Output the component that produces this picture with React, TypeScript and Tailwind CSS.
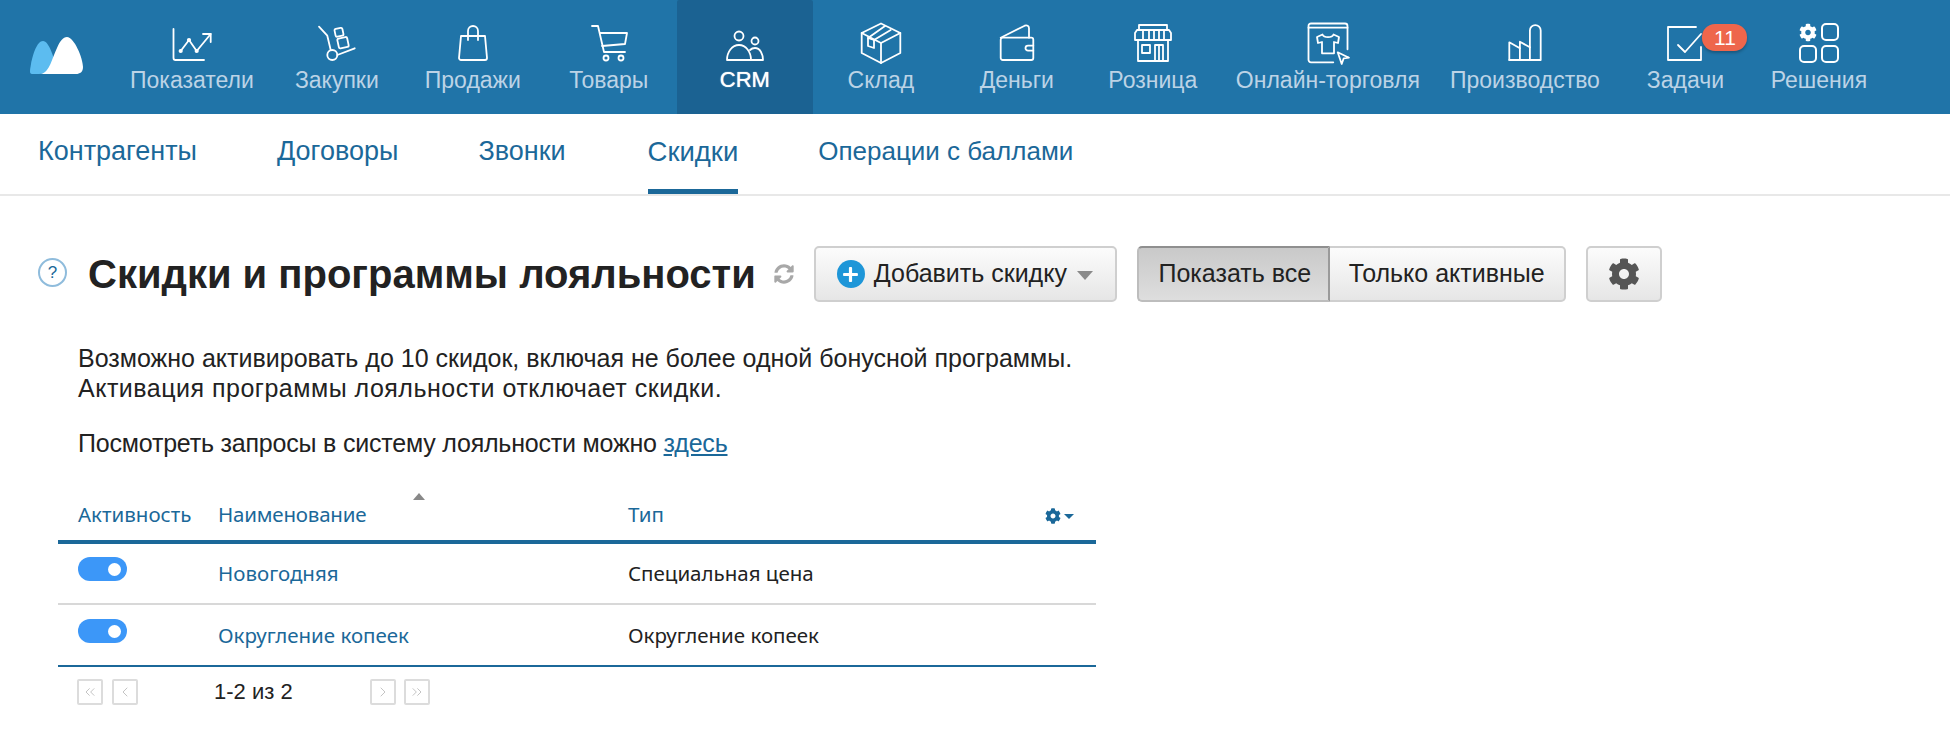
import type { ReactNode } from "react";
import { FaCog, FaPlus, FaSyncAlt } from "react-icons/fa";
import { ChevronLeft, ChevronRight, ChevronsLeft, ChevronsRight } from "lucide-react";

const sans = { fontFamily: '"Liberation Sans", Arial, sans-serif' };

function Line({ children }: { children: ReactNode }) {
  return (
    <svg
      viewBox="0 0 40 40"
      className="h-[40px] w-[40px] overflow-visible"
      fill="none"
      stroke="currentColor"
      strokeWidth="1.8"
      strokeLinecap="round"
      strokeLinejoin="round"
    >
      {children}
    </svg>
  );
}

const ChartIcon = () => (
  <Line>
    <path d="M1.500 6V35a2 2 0 0 0 2 2H32" />
    <path d="M8.700 28L17 17L24.700 28L38.700 11" />
    <path d="M31 11H38.700V19" />
    <circle cx="8.700" cy="28" r="1.200" fill="currentColor" />
    <circle cx="17" cy="17" r="1.200" fill="currentColor" />
    <circle cx="24.700" cy="28" r="1.200" fill="currentColor" />
  </Line>
);

const TrolleyIcon = () => (
  <Line>
    <path d="M2 3.700L10.300 12.700L13.700 27" />
    <circle cx="15.300" cy="32" r="5" />
    <path d="M20.300 32L37.700 25.300" />
    <rect x="18" y="5.300" width="8" height="8" rx="1.500" transform="rotate(-12 22 9.300)" />
    <rect x="21" y="14.700" width="10" height="10" rx="1.500" transform="rotate(-12 26 19.700)" />
  </Line>
);

const BagIcon = () => (
  <Line>
    <path d="M8 13H32L34 35a2 2 0 0 1-2 2H8a2 2 0 0 1-2-2Z" />
    <path d="M15 17V8a5 5 0 0 1 10 0V17" />
  </Line>
);

const CartIcon = () => (
  <Line>
    <path d="M3 3H9L15 29H36" />
    <path d="M11 10H38L36 21L13 23" />
    <circle cx="17" cy="35" r="2.500" />
    <circle cx="32" cy="35" r="2.500" />
  </Line>
);

const UsersIcon = () => (
  <Line>
    <circle cx="14" cy="13" r="4.500" />
    <path d="M2 37C2 29 7 22 14 22C21 22 26 29 26 37Z" />
    <circle cx="30" cy="18" r="3.500" />
    <path d="M26 37H38C38 31 35 25 30 25C28 25 26 26 25 27" />
  </Line>
);

const BoxIcon = () => (
  <Line>
    <path d="M20 0.500L39.300 10V30L20 40L0.700 30V10Z" />
    <path d="M0.700 10L20 20L39.300 10" />
    <path d="M20 20V40" />
    <path d="M24 3L7 15V23L13 25V17L29.700 7" />
    <path d="M7 15L13 17" />
  </Line>
);

const WalletIcon = () => (
  <Line>
    <path d="M3.700 14.700L27.700 2.700C30 1.800 32 3 32 5.300V14.700" />
    <path d="M3.700 16.700a2 2 0 0 1 2-2H34.300a2 2 0 0 1 2 2V35a2 2 0 0 1-2 2H5.700a2 2 0 0 1-2-2Z" />
    <path d="M36.300 22.700H31a2.500 2.500 0 0 0 0 5H36.300" />
  </Line>
);

const StoreIcon = () => (
  <Line>
    <path d="M6 7V2H34V7" />
    <path d="M4 7H36L38 10V17H2V10Z" />
    <path d="M10 8V16M16 8V16M21 8V16M26 8V16M31 8V16" />
    <path d="M5 17V38H35V17" />
    <rect x="9" y="22" width="8" height="8" />
    <path d="M22 38V22H30V38" />
    <path d="M26 22V38" />
  </Line>
);

const OnlineIcon = () => (
  <Line>
    <path d="M25.300 39.300H3a2.500 2.500 0 0 1-2.500-2.500V3a2.500 2.500 0 0 1 2.500-2.500H37a2.500 2.500 0 0 1 2.500 2.500V26.300" />
    <path d="M0.500 4.700H39.500" />
    <path d="M14.500 11.500C16 15 24 15 25.500 11.500L31 14L30 20L26 19V30.300H14V19L10 20L9 14Z" />
    <path d="M29.700 29.300L41 34.700L35.700 35.300L33.700 41Z" />
  </Line>
);

const FactoryIcon = () => (
  <Line>
    <path d="M4.300 37H35.700V7.500a5.400 5.400 0 0 0-10.800 0V37" />
    <path d="M4.300 37V19.300L14.900 25.300V37" />
    <path d="M14.900 25.300V18.700L24.900 24.300" />
  </Line>
);

const TasksIcon = () => (
  <Line>
    <path d="M31 4H3V37H36V24" />
    <path d="M13 22L20 29L36 11" />
  </Line>
);

const SolutionsIcon = () => (
  <div className="grid h-[40px] w-[40px] grid-cols-2 grid-rows-2 gap-[4px]">
    <div className="flex items-center justify-center">
      <FaCog className="h-[19px] w-[19px]" />
    </div>
    <div className="rounded-[5px] border-2 border-white" />
    <div className="rounded-[5px] border-2 border-white" />
    <div className="rounded-[5px] border-2 border-white" />
  </div>
);

const navItems: { label: string; icon: ReactNode; active?: boolean; badge?: string }[] = [
  { label: "Показатели", icon: <ChartIcon /> },
  { label: "Закупки", icon: <TrolleyIcon /> },
  { label: "Продажи", icon: <BagIcon /> },
  { label: "Товары", icon: <CartIcon /> },
  { label: "CRM", icon: <UsersIcon />, active: true },
  { label: "Склад", icon: <BoxIcon /> },
  { label: "Деньги", icon: <WalletIcon /> },
  { label: "Розница", icon: <StoreIcon /> },
  { label: "Онлайн-торговля", icon: <OnlineIcon /> },
  { label: "Производство", icon: <FactoryIcon /> },
  { label: "Задачи", icon: <TasksIcon />, badge: "11" },
  { label: "Решения", icon: <SolutionsIcon /> },
];

function NavItem({ label, icon, active, badge }: (typeof navItems)[number]) {
  return (
    <div
      className={`flex h-[114px] min-w-[136px] flex-col items-center rounded-t-[2px] pt-[23px] ${
        active ? "bg-[#1b6292]" : ""
      } ${badge ? "pl-[20px] pr-[15px]" : "px-[15px]"}`}
    >
      <div className="relative flex h-[40px] items-center justify-center text-white">
        {icon}
        {badge && (
          <span className="absolute left-[37px] top-[1px] flex h-[27px] w-[45px] items-center justify-center rounded-[13px] bg-[#ee664c] text-[21px] text-white shadow-[0_2px_3px_rgba(0,0,0,0.25)]">
            {badge}
          </span>
        )}
      </div>
      <div
        className={`mt-[5px] whitespace-nowrap leading-[24px] ${
          active ? "text-[22px] text-white [text-shadow:0_0_1px_white]" : "text-[23px] text-[#bcd3e6]"
        }`}
      >
        {label}
      </div>
    </div>
  );
}

const tabs = ["Контрагенты", "Договоры", "Звонки", "Скидки", "Операции с баллами"];

function tabClass(tab: string) {
  if (tab === "Скидки") return "ml-[2px] border-[#1b6899] text-[27.500px]";
  if (tab === "Операции с баллами") return "border-transparent text-[26px]";
  return "border-transparent text-[27px]";
}

function Toggle() {
  return (
    <div className="flex h-[24px] w-[49px] items-center justify-end rounded-full bg-[#3c97f8] pr-[6px]">
      <div className="h-[13px] w-[13px] rounded-full bg-white" />
    </div>
  );
}

function PageButton({ children }: { children: ReactNode }) {
  return (
    <div className="flex h-[26px] w-[26px] items-center justify-center rounded-[2px] border-2 border-[#dcdcdc] text-[#c4c4c4]">
      {children}
    </div>
  );
}

export default function App() {
  return (
    <div className="h-[748px] w-[1950px] overflow-hidden bg-white text-[#222]" style={sans}>
      <header className="flex h-[114px] items-start bg-[#2074a8] pl-[115px]">
        <div className="relative h-0 w-0">
          <svg viewBox="0 0 54 40" className="absolute left-[-85px] top-[36px] h-[40px] w-[54px]">
            <path d="M2 38C-1 38 0 34 1 28C3 18 7 5 13 5C19 5 24 22 26 30C24 35 16 38 9 38Z" fill="#5cbcf0" />
            <path d="M11 38C20 36 22 22 27 12C30 5 33 1 37 1C44 1 53 22 53 31C53 36 50 38 46 38Z" fill="#fff" />
          </svg>
        </div>
        {navItems.map((item) => (
          <NavItem key={item.label} {...item} />
        ))}
      </header>

      <nav className="flex h-[82px] gap-[80px] border-b-2 border-[#e8e8e8] pl-[38px]">
        {tabs.map((tab) => (
          <div
            key={tab}
            className={`flex h-[80px] items-center border-b-[5px] text-[#1b6899] ${tabClass(tab)}`}
          >
            {tab}
          </div>
        ))}
      </nav>

      <main className="pl-[38px] pt-[50px]">
        <div className="flex h-[56px] items-center">
          <div className="mb-[4px] flex h-[29px] w-[29px] items-center justify-center rounded-full border-2 border-[#8fbcdc] text-[17px] leading-none text-[#1b6899]">
            ?
          </div>
          <h1 className="ml-[21px] whitespace-nowrap text-[40px] font-bold text-[#222]">
            Скидки и программы лояльности
          </h1>
          <FaSyncAlt className="ml-[18px] h-[20px] w-[20px] text-[#a8a8a8]" />
          <button className="ml-[20px] flex h-[56px] w-[303px] items-center rounded-[5px] border-2 border-[#cfcfcf] bg-gradient-to-b from-[#fcfcfc] to-[#e6e6e6] pl-[21px] text-[25px]">
            <span className="flex h-[28px] w-[28px] items-center justify-center rounded-full bg-[#1e96d8] text-white">
              <FaPlus className="h-[17px] w-[17px]" />
            </span>
            <span className="ml-[9px]">Добавить скидку</span>
            <span className="ml-[10px] mt-[3px] h-0 w-0 border-x-[8px] border-t-[9px] border-x-transparent border-t-[#8a8a8a]" />
          </button>
          <div className="ml-[20px] flex h-[56px] text-[25px]">
            <div className="flex w-[193px] items-center justify-center rounded-l-[5px] border-2 border-[#bdbdbd] border-r-[#9a9a9a] border-t-[#8f8f8f] bg-gradient-to-b from-[#c9c9c9] to-[#dedede] pl-[3px]">
              Показать все
            </div>
            <div className="flex w-[236px] items-center justify-center rounded-r-[5px] border-2 border-l-0 border-[#cfcfcf] bg-gradient-to-b from-[#fcfcfc] to-[#e6e6e6]">
              Только активные
            </div>
          </div>
          <button className="ml-[20px] flex h-[56px] w-[76px] items-center justify-center rounded-[5px] border-2 border-[#cfcfcf] bg-gradient-to-b from-[#fcfcfc] to-[#e6e6e6] text-[#555]">
            <FaCog className="h-[32px] w-[32px]" />
          </button>
        </div>

        <div className="mt-[41px] pl-[40px] text-[25px] leading-[30px]">
          <p>Возможно активировать до 10 скидок, включая не более одной бонусной программы.</p>
          <p className="tracking-[0.5px]">Активация программы лояльности отключает скидки.</p>
          <p className="mt-[25px] tracking-[-0.2px]">
            Посмотреть запросы в систему лояльности можно{" "}
            <a className="text-[#1b6899] underline">здесь</a>
          </p>
        </div>

        <div className="ml-[20px] mt-[31px] w-[1038px] text-[20.500px]" style={{ fontFamily: '"Noto Sans", sans-serif' }}>
          <div className="relative flex h-[55px] items-end border-b-4 border-[#1b6899] pb-[10px] text-[#1b6899]">
            <div className="w-[160px] pl-[20px]">Активность</div>
            <div className="w-[410px] tracking-[-0.2px]">Наименование</div>
            <div className="flex-1">Тип</div>
            <span className="absolute left-[355px] top-[4px] h-0 w-0 border-x-[6px] border-b-[7px] border-x-transparent border-b-[#888]" />
            <div className="mb-[6px] mr-[22px] flex items-center gap-[3px]">
              <FaCog className="h-[16px] w-[16px]" />
              <span className="h-0 w-0 border-x-[5px] border-t-[5px] border-x-transparent border-t-[#1b6899]" />
            </div>
          </div>
          <div className="flex h-[61px] border-b-2 border-[#d8d8d8]">
            <div className="w-[160px] pl-[20px] pt-[13px]">
              <Toggle />
            </div>
            <div className="flex w-[410px] items-center text-[#1b6899]">Новогодняя</div>
            <div className="flex items-center">Специальная цена</div>
          </div>
          <div className="flex h-[62px] border-b-2 border-[#1b6899]">
            <div className="w-[160px] pl-[20px] pt-[14px]">
              <Toggle />
            </div>
            <div className="flex w-[410px] items-center text-[#1b6899]">Округление копеек</div>
            <div className="flex items-center">Округление копеек</div>
          </div>
          <div className="flex items-center pl-[19px] pt-[8px]" style={sans}>
            <PageButton>
              <ChevronsLeft className="h-[16px] w-[16px]" strokeWidth={1.5} />
            </PageButton>
            <div className="ml-[9px]">
              <PageButton>
                <ChevronLeft className="h-[16px] w-[16px]" strokeWidth={1.5} />
              </PageButton>
            </div>
            <div className="ml-[76px] w-[156px] text-[22px]">1-2 из 2</div>
            <PageButton>
              <ChevronRight className="h-[16px] w-[16px]" strokeWidth={1.5} />
            </PageButton>
            <div className="ml-[8px]">
              <PageButton>
                <ChevronsRight className="h-[16px] w-[16px]" strokeWidth={1.5} />
              </PageButton>
            </div>
          </div>
        </div>
      </main>
    </div>
  );
}
